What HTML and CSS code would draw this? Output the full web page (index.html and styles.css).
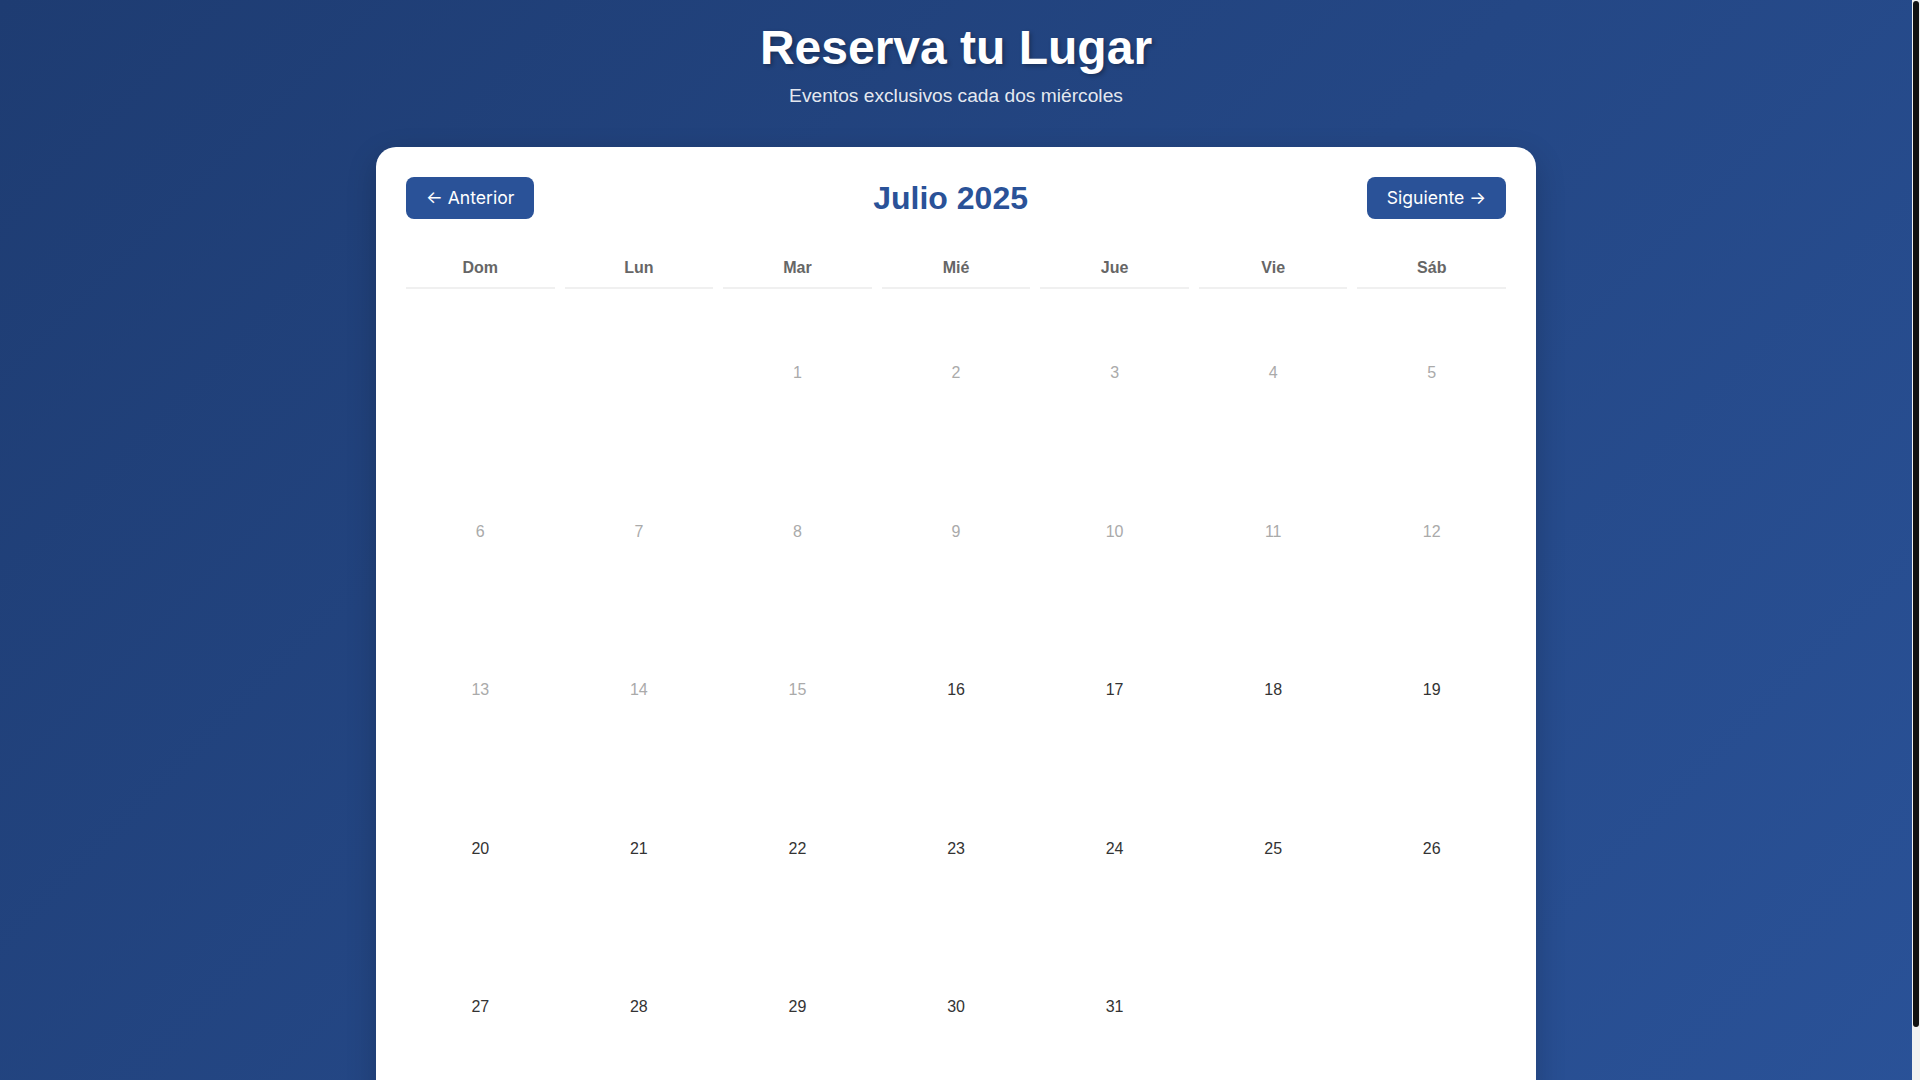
FILE: index.html
```html
<!DOCTYPE html>
<html lang="es">
<head>
<meta charset="utf-8">
<title>Reserva tu Lugar</title>
<link rel="stylesheet" href="styles.css">
</head>
<body>
<header class="page-header">
  <h1 class="title">Reserva tu Lugar</h1>
  <p class="subtitle">Eventos exclusivos cada dos miércoles</p>
</header>
<main class="card">
  <div class="nav">
    <button class="nav-btn">← Anterior</button>
    <h2 class="month">Julio 2025</h2>
    <button class="nav-btn">Siguiente →</button>
  </div>
  <div class="grid">
    <div class="dow">Dom</div>
    <div class="dow">Lun</div>
    <div class="dow">Mar</div>
    <div class="dow">Mié</div>
    <div class="dow">Jue</div>
    <div class="dow">Vie</div>
    <div class="dow">Sáb</div>

    <div class="day empty"></div>
    <div class="day empty"></div>
    <div class="day past">1</div>
    <div class="day past">2</div>
    <div class="day past">3</div>
    <div class="day past">4</div>
    <div class="day past">5</div>

    <div class="day past">6</div>
    <div class="day past">7</div>
    <div class="day past">8</div>
    <div class="day past">9</div>
    <div class="day past">10</div>
    <div class="day past">11</div>
    <div class="day past">12</div>

    <div class="day past">13</div>
    <div class="day past">14</div>
    <div class="day past">15</div>
    <div class="day">16</div>
    <div class="day">17</div>
    <div class="day">18</div>
    <div class="day">19</div>

    <div class="day">20</div>
    <div class="day">21</div>
    <div class="day">22</div>
    <div class="day">23</div>
    <div class="day">24</div>
    <div class="day">25</div>
    <div class="day">26</div>

    <div class="day">27</div>
    <div class="day">28</div>
    <div class="day">29</div>
    <div class="day">30</div>
    <div class="day">31</div>
    <div class="day empty"></div>
    <div class="day empty"></div>
  </div>
</main>
<div class="scrollbar" aria-hidden="true"><div class="scrollbar-thumb"></div></div>
</body>
</html>
```
FILE: styles.css
```css
* {
  box-sizing: border-box;
}

html {
  background: #2a5298;
}

body {
  margin: 0;
  padding: 20px 28px 20px 20px;
  min-height: 100vh;
  font-family: "Liberation Sans", Arial, sans-serif;
  background: linear-gradient(135deg, #1e3c72 0%, #2a5298 100%);
  color: #333;
}

.page-header {
  text-align: center;
  color: #fff;
  margin-bottom: 40px;
}

.title {
  margin: 0 0 10px;
  font-size: 48px;
  font-weight: 700;
  line-height: 1.15;
  text-shadow: 2px 2px 4px rgba(0, 0, 0, 0.3);
}

.subtitle {
  margin: 0;
  font-size: 19.2px;
  line-height: 1.15;
  color: rgba(255, 255, 255, 0.9);
}

.card {
  display: block;
  max-width: 1160px;
  margin: 0 auto;
  background: #fff;
  border-radius: 20px;
  padding: 30px;
  box-shadow: 0 10px 30px rgba(0, 0, 0, 0.2);
}

.nav {
  display: flex;
  justify-content: space-between;
  align-items: center;
  margin-bottom: 30px;
}

.nav-btn {
  font-family: Inter, "Noto Sans", sans-serif;
  font-size: 17.6px;
  line-height: 1.21;
  color: #fff;
  background: #2a5298;
  border: none;
  border-radius: 8px;
  padding: 10px 20px;
  cursor: pointer;
}

.month {
  margin: 0;
  font-size: 32px;
  font-weight: 700;
  line-height: 1.15;
  color: #2a5298;
}

.grid {
  display: grid;
  grid-template-columns: repeat(7, 1fr);
  gap: 10px;
}

.dow {
  text-align: center;
  font-weight: 700;
  font-size: 16px;
  line-height: 1.15;
  color: #666;
  padding: 10px 0;
  border-bottom: 2px solid #f0f0f0;
}

.day {
  aspect-ratio: 1;
  display: flex;
  align-items: center;
  justify-content: center;
  font-size: 16px;
  line-height: 1.15;
  color: #333;
}

.day.past {
  color: #aaa;
}

.scrollbar {
  position: fixed;
  top: 0;
  right: 0;
  width: 8px;
  height: 100vh;
  background: #f1f1f1;
  padding: 1px;
}

.scrollbar-thumb {
  width: 6px;
  height: 1026px;
  background: #111;
  border-radius: 3px;
}
```
